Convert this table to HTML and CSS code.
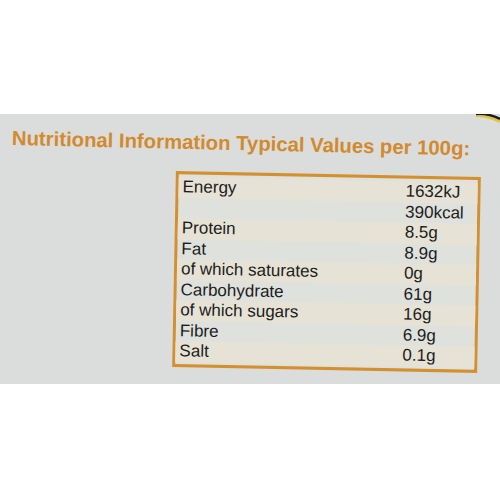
FILE: index.html
```html
<!DOCTYPE html>
<html>
<head>
<meta charset="utf-8">
<link rel="stylesheet" href="styles.css">
</head>
<body>
<div class="panel">
  <svg class="corner" width="24" height="10" viewBox="0 0 24 10"><path d="M0 1 Q12 1 24 7" stroke="#e2c43a" stroke-width="4" fill="none"/><path d="M0 0 Q12 -1 24 5" stroke="#1a1830" stroke-width="2.5" fill="none"/></svg>
  <h1 class="title">Nutritional Information Typical Values per 100g:</h1>
  <div class="box">
    <div class="row"><span class="lbl">Energy</span><span class="val">1632kJ</span></div>
    <div class="row"><span class="lbl"></span><span class="val">390kcal</span></div>
    <div class="row"><span class="lbl">Protein</span><span class="val">8.5g</span></div>
    <div class="row"><span class="lbl">Fat</span><span class="val">8.9g</span></div>
    <div class="row"><span class="lbl">of which saturates</span><span class="val">0g</span></div>
    <div class="row"><span class="lbl">Carbohydrate</span><span class="val">61g</span></div>
    <div class="row"><span class="lbl">of which sugars</span><span class="val">16g</span></div>
    <div class="row"><span class="lbl">Fibre</span><span class="val">6.9g</span></div>
    <div class="row"><span class="lbl">Salt</span><span class="val">0.1g</span></div>
  </div>
</div>
</body>
</html>
```
FILE: styles.css
```css
html, body {
  margin: 0;
  padding: 0;
  background: #ffffff;
}
body {
  font-family: "Liberation Sans", Arial, sans-serif;
  width: 500px;
  height: 500px;
  overflow: hidden;
}
.panel {
  position: relative;
  margin-top: 114px;
  height: 270px;
  background: #dadddc;
  padding-top: 12px;
  box-sizing: border-box;
  overflow: hidden;
}
.corner {
  position: absolute;
  right: 0;
  top: 0;
}
.title {
  margin: 0 0 0 12px;
  font-size: 20.3px;
  font-weight: bold;
  line-height: 24px;
  color: #d28a2e;
  white-space: nowrap;
  transform-origin: 0 50%;
  transform: rotate(1.3deg);
}
.box {
  margin: 24px 0 0 174px;
  width: 305px;
  height: 196px;
  box-sizing: border-box;
  border: 3px solid #d4902f;
  background: #dfe1dd;
  padding: 3px 0 0 0;
  transform: rotate(1.1deg);
}
.row {
  display: grid;
  grid-template-columns: 227px 1fr;
  height: 20.5px;
  font-size: 17px;
  line-height: 20.5px;
  color: #1c1c1c;
}
.row:nth-child(odd) {
  background: #e6e3d6;
}
.lbl {
  padding-left: 4px;
  white-space: nowrap;
}
.val {
  white-space: nowrap;
}
```
